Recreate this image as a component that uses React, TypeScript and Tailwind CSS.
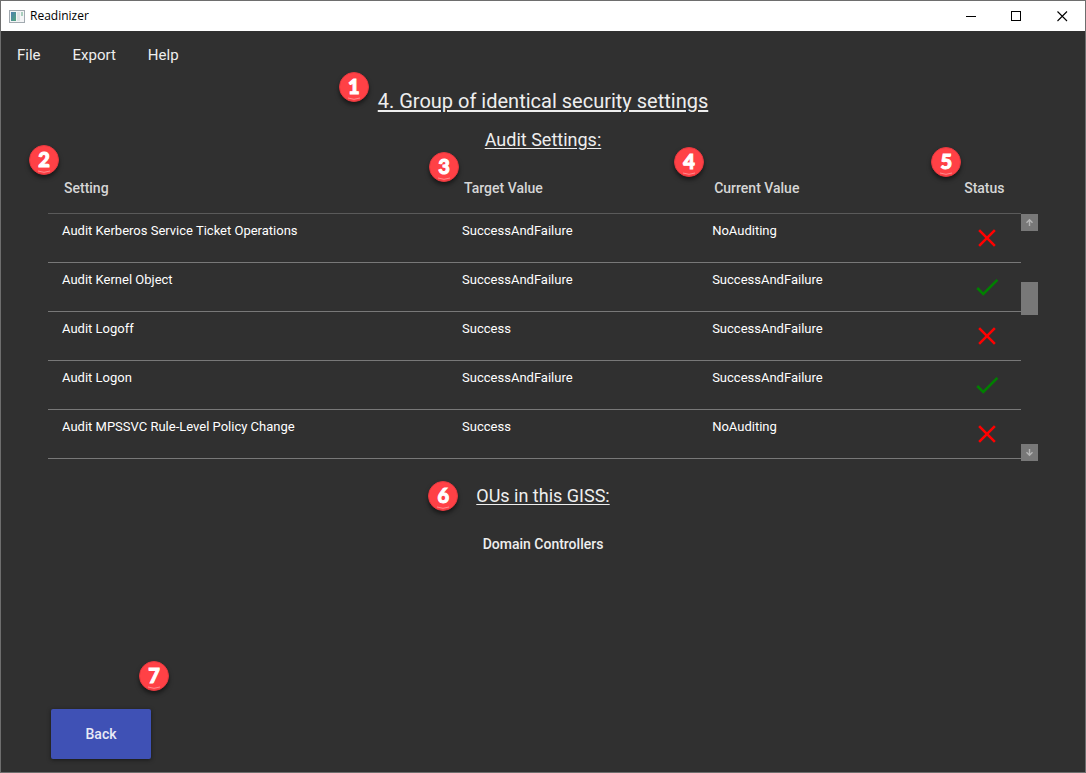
import type { ReactNode } from "react";
import clsx from "clsx";

type AuditRow = {
  setting: string;
  target: string;
  current: string;
  ok: boolean;
};

const rows: AuditRow[] = [
  { setting: "Audit Kerberos Service Ticket Operations", target: "SuccessAndFailure", current: "NoAuditing", ok: false },
  { setting: "Audit Kernel Object", target: "SuccessAndFailure", current: "SuccessAndFailure", ok: true },
  { setting: "Audit Logoff", target: "Success", current: "SuccessAndFailure", ok: false },
  { setting: "Audit Logon", target: "SuccessAndFailure", current: "SuccessAndFailure", ok: true },
  { setting: "Audit MPSSVC Rule-Level Policy Change", target: "Success", current: "NoAuditing", ok: false },
];

function Badge({ children, className }: { children: ReactNode; className: string }) {
  return (
    <span
      className={clsx(
        "absolute flex size-[30px] items-center justify-center rounded-full border border-[#e5383e] bg-[#ff4146] pb-0.5 font-['Lato',sans-serif] text-xl leading-none font-black text-white shadow-[0_3px_4px_rgba(0,0,0,0.5)] [-webkit-text-stroke:1px_white]",
        className,
      )}
    >
      {children}
      <svg className="absolute inset-0 size-7" viewBox="0 0 28 28" fill="none" aria-hidden="true">
        <path d="M8 25Q14 27.6 20 25" stroke="#ff8a8d" strokeWidth="1" />
      </svg>
    </span>
  );
}

function StatusIcon({ ok }: { ok: boolean }) {
  return ok ? (
    <svg className="size-[30px]" viewBox="0 0 24 24" fill="#008000" role="img" aria-label="Passed">
      <path d="M21,7L9,19L3.5,13.5L4.91,12.09L9,16.17L19.59,5.59L21,7Z" />
    </svg>
  ) : (
    <svg className="size-[30px]" viewBox="0 0 24 24" fill="#ff0000" role="img" aria-label="Failed">
      <path d="M19,6.41L17.59,5L12,10.59L6.41,5L5,6.41L10.59,12L5,17.59L6.41,19L12,13.41L17.59,19L19,17.59L13.41,12L19,6.41Z" />
    </svg>
  );
}

function AppIcon() {
  return (
    <svg className="h-[13px] w-4" viewBox="0 0 16 13" aria-hidden="true">
      <defs>
        <linearGradient id="pane" x1="0" y1="0" x2="1" y2="1">
          <stop offset="0" stopColor="#4d7fb0" />
          <stop offset="1" stopColor="#52a57c" />
        </linearGradient>
      </defs>
      <rect x="0.5" y="0.5" width="15" height="12" fill="#f4f5f6" stroke="#a2aab0" />
      <rect x="2" y="2" width="5" height="9" fill="url(#pane)" />
      <rect x="8" y="2" width="3" height="9" fill="#dfe3e5" />
      <rect x="12" y="2" width="2" height="4" fill="#a9cfbd" />
    </svg>
  );
}

function TitleBar() {
  const control = "flex h-full w-[46px] items-center justify-center";
  return (
    <header className="flex h-[30px] shrink-0 items-center bg-white pl-2 text-black">
      <AppIcon />
      <span className="ml-[5px] font-['Open_Sans',sans-serif] text-xs">Readinizer</span>
      <div className="ml-auto flex h-full">
        <button type="button" aria-label="Minimize" className={control}>
          <svg className="size-[11px]" viewBox="0 0 11 11" fill="none" stroke="currentColor" shapeRendering="crispEdges">
            <path d="M1 5.5H11" />
          </svg>
        </button>
        <button type="button" aria-label="Maximize" className={control}>
          <svg className="size-[11px]" viewBox="0 0 11 11" fill="none" stroke="currentColor" shapeRendering="crispEdges">
            <rect x="0.5" y="0.5" width="9" height="9" />
          </svg>
        </button>
        <button type="button" aria-label="Close" className={control}>
          <svg className="size-[11px]" viewBox="0 0 11 11" fill="none" stroke="currentColor">
            <path d="M0.5 0.5L10 10M10 0.5L0.5 10" strokeWidth="1.1" />
          </svg>
        </button>
      </div>
    </header>
  );
}

function ScrollBar() {
  const arrow = "flex size-[17px] items-center justify-center bg-[#787878] text-[#b4b4b4]";
  return (
    <div className="flex w-[17px] shrink-0 flex-col pt-[51px]">
      <button type="button" aria-label="Scroll up" className={arrow}>
        <svg className="size-[9px]" viewBox="0 0 9 9" fill="none" stroke="currentColor" strokeWidth="1.4">
          <path d="M4.5 8V2M1.5 4.7L4.5 1.7L7.5 4.7" />
        </svg>
      </button>
      <div className="flex-1 pt-[51px]">
        <div className="h-[33px] bg-[#787878]" />
      </div>
      <button type="button" aria-label="Scroll down" className={arrow}>
        <svg className="size-[9px]" viewBox="0 0 9 9" fill="none" stroke="currentColor" strokeWidth="1.4">
          <path d="M4.5 1V7M1.5 4.3L4.5 7.3L7.5 4.3" />
        </svg>
      </button>
    </div>
  );
}

function AuditTable() {
  const head = "relative pl-4 text-left font-medium";
  const cell = "pt-[7px] pl-3.5 align-top leading-5";
  return (
    <div className="mx-[47px] mt-[9px] flex">
      <div className="min-w-0 flex-1 pb-0.5">
        <table className="w-full table-fixed border-separate border-spacing-0">
          <colgroup>
            <col className="w-[41.12%]" />
            <col className="w-[25.7%]" />
            <col className="w-[25.7%]" />
            <col />
          </colgroup>
          <thead className="text-sm text-[#d6d6d6]">
            <tr className="h-[51px] [&>th]:border-b [&>th]:border-[#5a5a5a]">
              <th scope="col" className={head}>
                Setting
                <Badge className="-top-[18px] -left-[19px]">2</Badge>
              </th>
              <th scope="col" className={head}>
                Target Value
                <Badge className="-top-[11px] -left-[19px]">3</Badge>
              </th>
              <th scope="col" className={head}>
                Current Value
                <Badge className="-top-4 -left-6">4</Badge>
              </th>
              <th scope="col" className={head}>
                Status
                <Badge className="-top-4 -left-[17px]">5</Badge>
              </th>
            </tr>
          </thead>
          <tbody className="text-[13px] text-white">
            {rows.map((row) => (
              <tr key={row.setting} className="h-[49px] [&>td]:border-b [&>td]:border-[#787878]">
                <td className={cell}>{row.setting}</td>
                <td className={cell}>{row.target}</td>
                <td className={cell}>{row.current}</td>
                <td className="pt-[9px] pl-6 align-top">
                  <StatusIcon ok={row.ok} />
                </td>
              </tr>
            ))}
          </tbody>
        </table>
      </div>
      <ScrollBar />
    </div>
  );
}

export default function App() {
  return (
    <div className="flex min-h-screen flex-col border border-[#6e6e6e] bg-[#303030] font-['Roboto',sans-serif] text-[#eeeeee]">
      <TitleBar />
      <nav className="flex h-12 shrink-0 items-center text-[15px]">
        <button type="button" className="px-4">File</button>
        <button type="button" className="px-4">Export</button>
        <button type="button" className="px-4">Help</button>
      </nav>
      <main className="flex flex-1 flex-col">
        <h1 className="mt-2 text-center text-xl leading-7">
          <span className="relative inline-block">
            <span className="underline underline-offset-2">4. Group of identical security settings</span>
            <Badge className="-top-[15px] -left-[39px]">1</Badge>
          </span>
        </h1>
        <h2 className="mt-[11px] text-center text-lg leading-7 underline underline-offset-2">Audit Settings:</h2>
        <AuditTable />
        <h2 className="mt-[21px] text-center text-lg leading-7">
          <span className="relative inline-block">
            <span className="underline underline-offset-2">OUs in this GISS:</span>
            <Badge className="-top-px -left-12">6</Badge>
          </span>
        </h2>
        <p className="mt-6 text-center text-sm leading-5 font-medium">Domain Controllers</p>
        <div className="mt-auto mb-[13px] ml-[50px] flex">
          <div className="relative">
            <button
              type="button"
              className="h-[50px] w-[100px] rounded-xs bg-[#3f51b5] text-sm font-medium text-[#e8eaf6] shadow-[0_1px_4px_rgba(0,0,0,0.5)]"
            >
              Back
            </button>
            <Badge className="-top-12 left-[88px]">7</Badge>
          </div>
        </div>
      </main>
    </div>
  );
}
